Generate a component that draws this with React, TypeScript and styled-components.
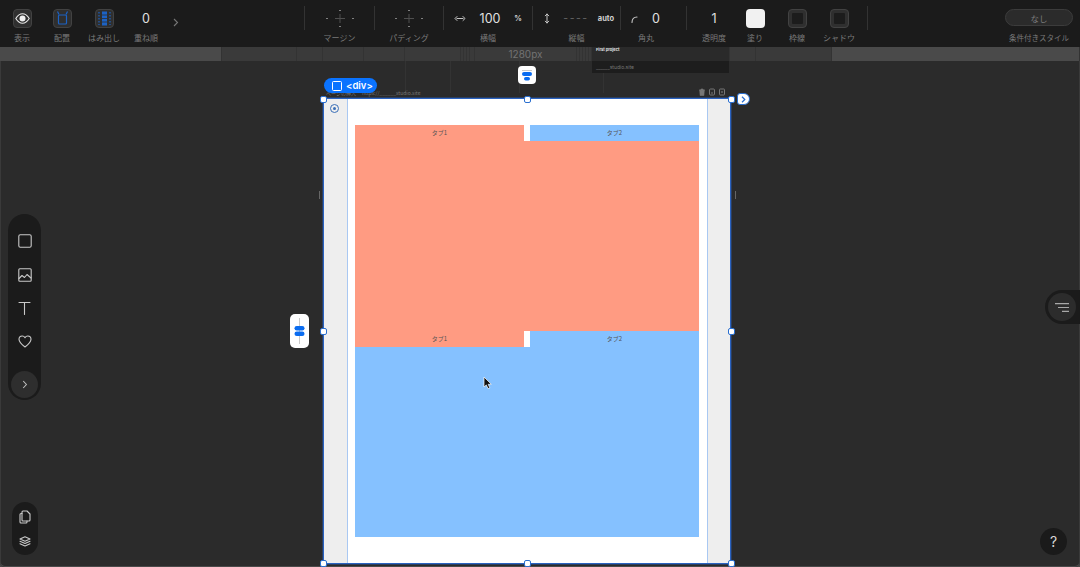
import React from "react";
import styled, { createGlobalStyle } from "styled-components";

const Global = createGlobalStyle`
  html, body { margin: 0; padding: 0; width: 1080px; height: 567px; overflow: hidden; background: #4a4a4a; }
  #root { width: 1080px; height: 567px; }
  * { box-sizing: border-box; }
`;

const Page = styled.div`
  width: 1080px; height: 567px; display: flex; flex-direction: column;
  font-family: "Noto Sans CJK JP", "Noto Sans", sans-serif; background: #4a4a4a;
`;
const Toolbar = styled.header`
  height: 47px; flex: none; background: #1b1b1b; display: flex; align-items: flex-start; padding: 0 7px 0 2px;
`;
const Cell = styled.div<{ $w: number }>`
  width: ${p => p.$w}px; flex: none; height: 47px; padding-top: 9px; display: flex; flex-direction: column; align-items: center;
`;
const Slot = styled.div<{ $pl?: number }>`
  height: 19px; display: flex; align-items: center; justify-content: ${p => (p.$pl !== undefined ? "flex-start" : "center")};
  align-self: ${p => (p.$pl !== undefined ? "stretch" : "center")}; padding-left: ${p => p.$pl ?? 0}px;
`;
const Label = styled.span`
  margin-top: 5px; height: 10px; font-size: 8px; line-height: 10px; color: #7a7a7a; white-space: nowrap;
`;
const WideLabel = styled(Label)`
  font-size: 7.5px; margin-top: 6px;
`;
const Value = styled.span<{ $w?: number }>`
  width: ${p => (p.$w ? `${p.$w}px` : "auto")}; text-align: center; font-family: Inter, sans-serif; font-size: 12.5px; color: #e0e0e0; line-height: 19px;
`;
const Unit = styled.span<{ $w: number }>`
  width: ${p => p.$w}px; text-align: center; font-family: Inter, sans-serif; font-weight: 700; font-size: 7.5px; color: #d0d0d0; line-height: 19px;
`;
const Dashes = styled(Value)`
  color: #666; font-size: 10.5px; letter-spacing: 1.5px;
`;
const IconBox = styled.div`
  width: 19px; height: 19px; border-radius: 4px; background: #2f2f2f; border: 1px solid #424242; display: flex; align-items: center; justify-content: center;
`;
const FillSwatch = styled.div`
  width: 19px; height: 19px; border-radius: 4px; background: #f1f1f1;
`;
const InnerSquare = styled.div`
  width: 11px; height: 11px; background: #1c1c1c; border-radius: 1px;
`;
const Sep = styled.div`
  width: 1px; height: 24px; margin-top: 6px; background: #333; flex: none;
`;
const Space = styled.div<{ $w: number }>`
  width: ${p => p.$w}px; flex: none;
`;
const RightCell = styled.div`
  margin-left: auto; width: 68px; height: 47px; padding-top: 9px; display: flex; flex-direction: column; align-items: center;
`;
const NonePill = styled.div`
  width: 68px; height: 17px; border-radius: 9px; background: #2b2b2b; border: 1px solid #3c3c3c; color: #7b7b7b; font-size: 8.5px;
  display: flex; align-items: center; justify-content: center; margin-bottom: 1px;
`;
const Chevron = styled.div`
  width: 20px; height: 44px; display: flex; align-items: center; justify-content: center; flex: none;
`;

const Ruler = styled.div`
  height: 14px; flex: none; display: flex; background: #4a4a4a;
`;
const RulerSeg = styled.div<{ $w: number; $light?: boolean }>`
  width: ${p => p.$w}px; flex: none; background: ${p => (p.$light ? "#4a4a4a" : "#3a3a3a")}; border-right: 1px solid #333;
  color: #737373; font-family: Inter, sans-serif; font-size: 10px; line-height: 14px; text-align: center;
`;

const Canvas = styled.main`
  position: relative; flex: 1; background: #2b2b2b; border-radius: 0 0 5px 5px;
  box-shadow: inset 0 -1px 0 #4a4a4a, inset 1px 0 0 #3a3a3a, inset -1px 0 0 #3a3a3a;
`;
/* Everything below sits on the free canvas; offsets are relative to the canvas (y - 61). */
const Guide = styled.div<{ $x: number }>`
  position: absolute; left: ${p => p.$x}px; top: 0; width: 1px; height: 32px; background: #333;
`;
const ProjectCard = styled.div`
  position: absolute; left: 592px; top: -14px; width: 137px; height: 26px; display: flex; flex-direction: column; justify-content: space-between;
  background: #2a2a2a; border-radius: 0 0 2px 2px; z-index: 3;
`;
const ProjectName = styled.div`
  font-family: Inter, sans-serif; font-size: 4px; font-weight: 700; line-height: 5px; color: #e0e0e0; padding: 0 4px;
`;
const ProjectUrl = styled.div`
  height: 12px; background: #1d1d1d; font-family: Inter, sans-serif; font-size: 5px; line-height: 12px; color: #777; padding: 0 4px;
`;
const Frame = styled.section`
  position: absolute; left: 323px; top: 37px; width: 408px; height: 466px; display: flex; border: 1px solid #2a62c0; background: #fff;
  box-shadow: 0 0 0 1px rgba(42, 98, 192, 0.35);
`;
const Strip = styled.div<{ $side: "l" | "r" }>`
  flex: none; width: ${p => (p.$side === "l" ? 24 : 23)}px; background: #eeeeee; position: relative;
  ${p => (p.$side === "l" ? "border-right: 1.5px solid #a9c8f2;" : "border-left: 1.5px solid #a9c8f2;")}
`;
const TargetMark = styled.div`
  position: absolute; left: 6px; top: 5px; width: 9px; height: 9px; border-radius: 50%; border: 1px solid #3a6fb8; display: flex; align-items: center; justify-content: center;
  &::after { content: ""; width: 3px; height: 3px; border-radius: 50%; background: #3a6fb8; }
`;
const Content = styled.div`
  flex: 1; padding: 26px 8px 26px 7px; display: flex; flex-direction: column;
`;
const TabRow = styled.div`
  display: flex; gap: 6px; height: 16px; flex: none;
`;
const Tab = styled.div<{ $c: string }>`
  flex: 1; background: ${p => p.$c}; font-size: 6px; line-height: 16px; text-align: center; color: #555;
`;
const TabPanel = styled.div<{ $c: string }>`
  height: 190px; flex: none; background: ${p => p.$c};
`;
const Handle = styled.div<{ $x: number; $y: number }>`
  position: absolute; left: ${p => p.$x - 3.5}px; top: ${p => p.$y - 64.5}px; width: 7px; height: 7px; border-radius: 2px; background: #fff; border: 1px solid #2a6fd0; z-index: 4;
`;
const Grip = styled.div<{ $x: number }>`
  position: absolute; left: ${p => p.$x}px; top: 130px; width: 1px; height: 8px; background: #666;
`;
const DivBadge = styled.div`
  position: absolute; left: 324px; top: 17px; width: 53px; height: 15px; border-radius: 8px; background: #0a73ff; color: #fff;
  font-family: Inter, sans-serif; font-weight: 600; font-size: 9.5px; display: flex; align-items: center; gap: 4px; padding-left: 8px; z-index: 5;
`;
const BadgeSquare = styled.span`
  width: 10px; height: 10px; border: 1px solid #fff; border-radius: 1.5px; flex: none;
`;
const PageInfo = styled.div`
  position: absolute; left: 326px; top: 28px; height: 7px; display: flex; gap: 6px; font-size: 5px; line-height: 7px; color: #777; white-space: nowrap; z-index: 4;
`;
const FrameTools = styled.div`
  position: absolute; left: 698px; top: 27px; display: flex; gap: 2px;
`;
const NextPill = styled.div`
  position: absolute; left: 737px; top: 32px; width: 13px; height: 12px; border-radius: 3px 6px 6px 3px; background: #fff; border: 1px solid #2a6fd0;
  display: flex; align-items: center; justify-content: center;
`;
const AlignTop = styled.div`
  position: absolute; left: 518px; top: 5px; width: 18px; height: 18px; border-radius: 4px; background: #fff; display: flex; align-items: center; justify-content: center;
`;
const AlignLeft = styled.div`
  position: absolute; left: 290px; top: 253px; width: 19px; height: 34px; border-radius: 5px; background: #fff; display: flex; align-items: center; justify-content: center;
`;
const ToolRail = styled.nav`
  position: absolute; left: 8px; top: 153px; width: 33px; height: 186px; border-radius: 17px; background: #1b1b1b; display: flex; flex-direction: column; align-items: center; padding-top: 15px;
`;
const ToolSlot = styled.div`
  height: 33.5px; width: 33px; flex: none; display: flex; align-items: center; justify-content: center; padding-bottom: 9px;
`;
const MoreTools = styled.div`
  width: 27px; height: 27px; margin-top: 8px; border-radius: 50%; background: #2e2e2e; display: flex; align-items: center; justify-content: center;
`;
const PagesRail = styled.nav`
  position: absolute; left: 12px; top: 441px; width: 26px; height: 53px; border-radius: 13px; background: #1b1b1b; display: flex; flex-direction: column; align-items: center; justify-content: center; gap: 12px;
`;
const FilterTab = styled.div`
  position: absolute; right: 0; top: 229px; width: 35px; height: 34px; border-radius: 17px 0 0 17px; background: #1b1b1b; padding: 3px 0 0 3px;
`;
const FilterDisc = styled.div`
  width: 28px; height: 28px; border-radius: 50%; background: #2c2c2c; display: flex; align-items: center; justify-content: center;
`;
const Help = styled.div`
  position: absolute; left: 1040px; top: 467px; width: 27px; height: 27px; border-radius: 50%; background: #1a1a1a; color: #d8d8d8;
  font-family: Inter, sans-serif; font-size: 14px; display: flex; align-items: center; justify-content: center;
`;
const Cursor = styled.svg`
  position: absolute; left: 483px; top: 315px;
`;

const Ic = styled.svg`
  display: block; flex: none;
`;
const stroke = { fill: "none", stroke: "#c9c9c9", strokeWidth: 1.1, strokeLinecap: "round", strokeLinejoin: "round" } as const;
const blue = { fill: "none", stroke: "#1c62c4", strokeWidth: 1.2 } as const;

const Cross = () => (
  <Ic width="30" height="19" viewBox="0 0 30 19">
    <path d="M10 9.500h10M15 5v9" stroke="#4f4f4f" strokeWidth="1" />
    <path d="M14 1.500h2M14 17.500h2M1 9.500h2M27 9.500h2" stroke="#808080" strokeWidth="1" />
  </Ic>
);

const segs: [number, boolean, string][] = [
  [222, true, ""], [75, false, ""], [26, false, ""], [41, false, ""], [41, false, ""], [56, false, ""],
  [3, false, ""], [3, false, ""], [3, false, ""], [5, false, ""], [102, false, "1280px"],
  [3, false, ""], [3, false, ""], [3, false, ""], [3, false, ""], [3, false, ""], [138, false, ""],
  [26, false, ""], [76, false, ""], [248, true, ""],
];

export default function App() {
  return (
    <Page>
      <Global />
      <Toolbar>
        <Cell $w={40}>
          <Slot>
            <IconBox>
              <Ic width="15" height="11" viewBox="0 0 15 11">
                <path d="M.8 5.5C3 2 5 .8 7.5.8S12 2 14.2 5.5C12 9 10 10.200 7.500 10.200S3 9 .8 5.500Z" fill="none" stroke="#e8e8e8" strokeWidth="1.1" />
                <circle cx="7.500" cy="5.500" r="3" fill="#f0f0f0" />
              </Ic>
            </IconBox>
          </Slot>
          <Label>表示</Label>
        </Cell>
        <Cell $w={40}>
          <Slot>
            <IconBox>
              <Ic width="13" height="15" viewBox="0 0 13 15">
                <rect x="2.500" y="4" width="8" height="9" rx="1" {...blue} />
                <path d="M3 3.500 1.500.5M10 3.500 11.500.5" {...blue} />
              </Ic>
            </IconBox>
          </Slot>
          <Label>配置</Label>
        </Cell>
        <Cell $w={44}>
          <Slot>
            <IconBox>
              <Ic width="15" height="15" viewBox="0 0 15 15">
                <rect x="5" y=".5" width="5" height="14" fill="#1c62c4" />
                <path d="M2 1v13M13 1v13" {...blue} strokeDasharray="1.500 1.500" />
                <path d="M5 4h5M5 7.500h5M5 11h5" stroke="#2f2f2f" strokeWidth=".8" />
              </Ic>
            </IconBox>
          </Slot>
          <Label>はみ出し</Label>
        </Cell>
        <Cell $w={40}>
          <Slot><Value>0</Value></Slot>
          <Label>重ね順</Label>
        </Cell>
        <Chevron>
          <Ic width="6" height="9" viewBox="0 0 6 9"><path d="M1 1l3.500 3.500L1 8" fill="none" stroke="#777" strokeWidth="1.100" /></Ic>
        </Chevron>
        <Space $w={118} />
        <Sep />
        <Cell $w={69}>
          <Slot><Cross /></Slot>
          <Label>マージン</Label>
        </Cell>
        <Sep />
        <Cell $w={68}>
          <Slot><Cross /></Slot>
          <Label>パディング</Label>
        </Cell>
        <Sep />
        <Cell $w={88}>
          <Slot $pl={8}>
            <Ic width="16" height="7" viewBox="0 0 16 7"><path d="M5 3.500h6M5 1.500l-2 2 2 2M11 1.500l2 2-2 2" {...stroke} strokeWidth={1} /></Ic>
            <Value $w={44}>100</Value>
            <Unit $w={12}>%</Unit>
          </Slot>
          <Label>横幅</Label>
        </Cell>
        <Sep />
        <Cell $w={87}>
          <Slot $pl={6}>
            <Ic width="16" height="11" viewBox="0 0 16 11"><path d="M8 1v9M6.300 2.800 8 1l1.700 1.800M6.300 8.200 8 10l1.700-1.800" {...stroke} strokeWidth={1} /></Ic>
            <Dashes $w={42}>----</Dashes>
            <Unit $w={18}>auto</Unit>
          </Slot>
          <Label>縦幅</Label>
        </Cell>
        <Sep />
        <Cell $w={50}>
          <Slot $pl={7}>
            <Ic width="14" height="8" viewBox="0 0 14 8"><path d="M4 7.500C4 4 6 2 9 2" {...stroke} /></Ic>
            <Value $w={28}>0</Value>
          </Slot>
          <Label>角丸</Label>
        </Cell>
        <Space $w={15} />
        <Sep />
        <Cell $w={54}>
          <Slot><Value>1</Value></Slot>
          <Label>透明度</Label>
        </Cell>
        <Cell $w={28}>
          <Slot><FillSwatch /></Slot>
          <Label>塗り</Label>
        </Cell>
        <Cell $w={56}>
          <Slot><IconBox><InnerSquare /></IconBox></Slot>
          <Label>枠線</Label>
        </Cell>
        <Cell $w={28}>
          <Slot><IconBox><InnerSquare /></IconBox></Slot>
          <Label>シャドウ</Label>
        </Cell>
        <Space $w={14} />
        <Sep />
        <RightCell>
          <NonePill>なし</NonePill>
          <WideLabel>条件付きスタイル</WideLabel>
        </RightCell>
      </Toolbar>
      <Ruler>
        {segs.map(([w, light, text], i) => (
          <RulerSeg key={i} $w={w} $light={light}>{text}</RulerSeg>
        ))}
      </Ruler>
      <Canvas>
        <Guide $x={405} />
        <Guide $x={450} />
        <Guide $x={519} />
        <Guide $x={603} />
        <ProjectCard>
          <ProjectName>First project</ProjectName>
          <ProjectUrl>______studio.site</ProjectUrl>
        </ProjectCard>

        <DivBadge><BadgeSquare />&lt;div&gt;</DivBadge>
        <PageInfo><span>ページの挿入</span><span>https://______studio.site</span></PageInfo>
        <FrameTools>
          <Ic width="8" height="8" viewBox="0 0 8 8"><path d="M1 2h6M3 2V1h2v1M1.700 2l.4 5.500h3.800L6.300 2Z" fill="#777" stroke="#777" strokeWidth=".6" /></Ic>
          <Ic width="8" height="8" viewBox="0 0 8 8"><rect x="1.500" y="1" width="5" height="6" rx="1" fill="none" stroke="#777" /><path d="M3 5h2" stroke="#777" /></Ic>
          <Ic width="8" height="8" viewBox="0 0 8 8"><rect x="1.500" y="1" width="5" height="6" rx=".6" fill="none" stroke="#777" /><path d="M4 3v2M3 4h2" stroke="#777" strokeWidth=".7" /></Ic>
        </FrameTools>
        <NextPill>
          <Ic width="5" height="7" viewBox="0 0 5 7"><path d="M1 .8 3.800 3.500 1 6.200" fill="none" stroke="#2a6fd0" strokeWidth="1.200" /></Ic>
        </NextPill>
        <AlignTop>
          <Ic width="12" height="11" viewBox="0 0 12 11">
            <path d="M1 .5h10" stroke="#c9c9c9" />
            <rect x="1" y="2" width="10" height="4" rx="2" fill="#0a6cf0" />
            <rect x="3" y="7" width="6" height="3.500" rx="1.700" fill="#0a6cf0" />
          </Ic>
        </AlignTop>
        <AlignLeft>
          <Ic width="11" height="26" viewBox="0 0 11 26">
            <path d="M5.500 0v26" stroke="#c9c9c9" />
            <rect x=".5" y="8" width="10" height="4.500" rx="2.200" fill="#0a6cf0" />
            <rect x=".5" y="13.500" width="10" height="4.500" rx="2.200" fill="#0a6cf0" />
          </Ic>
        </AlignLeft>
        <Grip $x={319} />
        <Grip $x={735} />

        <Frame>
          <Strip $side="l"><TargetMark /></Strip>
          <Content>
            <TabRow><Tab $c="#ff9b82">タブ1</Tab><Tab $c="#85c1ff">タブ2</Tab></TabRow>
            <TabPanel $c="#ff9b82" />
            <TabRow><Tab $c="#ff9b82">タブ1</Tab><Tab $c="#85c1ff">タブ2</Tab></TabRow>
            <TabPanel $c="#85c1ff" />
          </Content>
          <Strip $side="r" />
        </Frame>
        {[[323, 99], [527, 99], [731, 99], [323, 331], [731, 331], [323, 563], [527, 563], [731, 563]].map(([x, y]) => (
          <Handle key={`${x}-${y}`} $x={x} $y={y} />
        ))}

        <ToolRail>
          <ToolSlot><Ic width="14" height="14" viewBox="0 0 14 14"><rect x=".8" y=".8" width="12.400" height="12.400" rx="1.500" {...stroke} /></Ic></ToolSlot>
          <ToolSlot><Ic width="14" height="14" viewBox="0 0 14 14"><rect x=".8" y=".8" width="12.400" height="12.400" rx="1" {...stroke} /><path d="M1 10.500l3-3 2.500 2 2.500-3 4 3.500" {...stroke} /></Ic></ToolSlot>
          <ToolSlot><Ic width="13" height="14" viewBox="0 0 13 14"><path d="M1 1.500h11M6.500 1.500v12" {...stroke} /></Ic></ToolSlot>
          <ToolSlot><Ic width="14" height="13" viewBox="0 0 14 13"><path d="M7 12C3 9 1 7 1 4.300 1 2.300 2.500 1 4.200 1 5.400 1 6.400 1.600 7 2.700 7.600 1.600 8.600 1 9.800 1 11.500 1 13 2.300 13 4.300 13 7 11 9 7 12Z" {...stroke} /></Ic></ToolSlot>
          <MoreTools>
            <Ic width="6" height="9" viewBox="0 0 6 9"><path d="M1.200 1l3.200 3.500L1.200 8" fill="none" stroke="#bdbdbd" strokeWidth="1.100" /></Ic>
          </MoreTools>
        </ToolRail>
        <PagesRail>
          <Ic width="12" height="14" viewBox="0 0 12 14"><path d="M4 1h4l3 3v6a1 1 0 0 1-1 1H4a1 1 0 0 1-1-1V2a1 1 0 0 1 1-1Z" {...stroke} /><path d="M3 3.500H2a1 1 0 0 0-1 1V12a1 1 0 0 0 1 1h5a1 1 0 0 0 1-1v-1" {...stroke} /></Ic>
          <Ic width="12" height="11" viewBox="0 0 12 11"><path d="M6 .8 11 3 6 5.200 1 3Z" {...stroke} /><path d="M1 5.300 6 7.500l5-2.200M1 7.700 6 10l5-2.300" {...stroke} /></Ic>
        </PagesRail>
        <FilterTab>
          <FilterDisc>
            <Ic width="14" height="9" viewBox="0 0 14 9"><path d="M0 .7h14M3 4.500h11M7 8.300h7" stroke="#a8a8a8" strokeWidth="1.200" /></Ic>
          </FilterDisc>
        </FilterTab>
        <Help>?</Help>
        <Cursor width="10" height="14" viewBox="0 0 10 14"><path d="M1 1v10l2.300-2.100L5 12.600l1.800-.8L5.200 8.300H8.300Z" fill="#111" stroke="#fff" strokeWidth=".7" /></Cursor>
      </Canvas>
    </Page>
  );
}
